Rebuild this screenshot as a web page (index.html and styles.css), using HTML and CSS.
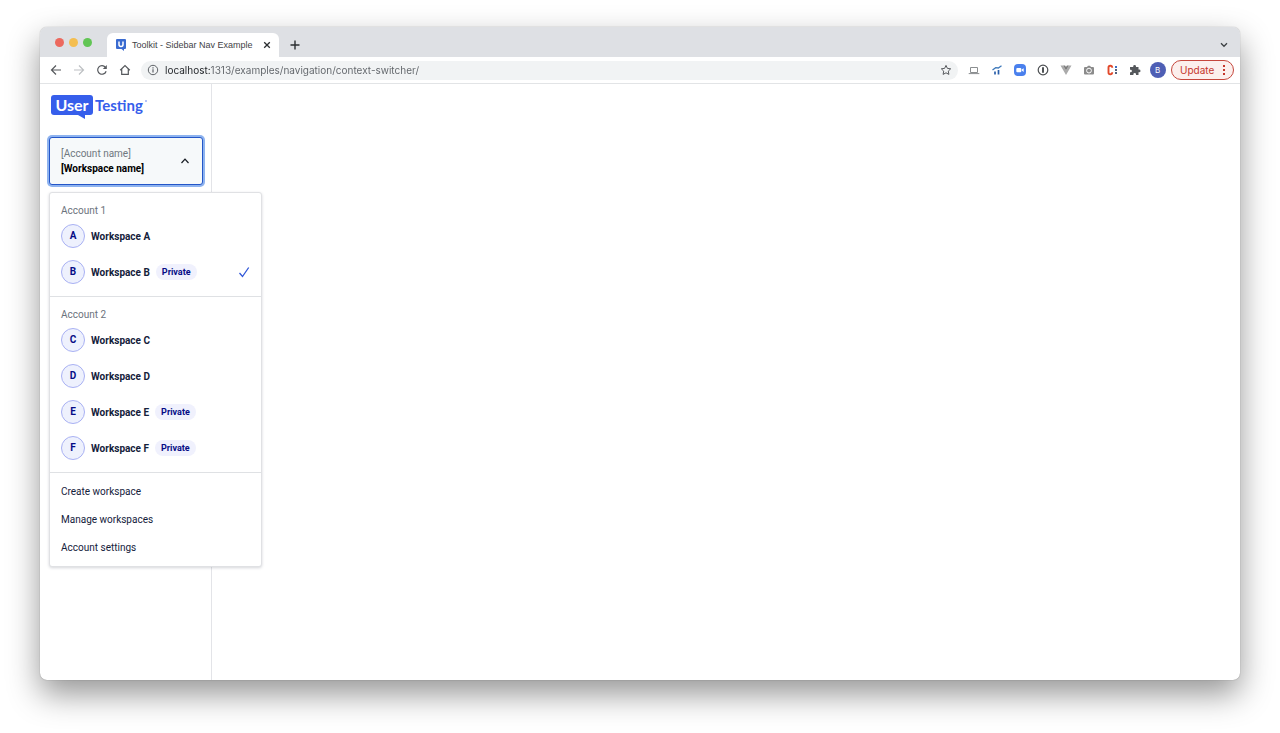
FILE: index.html
```html
<!DOCTYPE html>
<html lang="en">
<head>
<meta charset="utf-8">
<meta name="viewport" content="width=device-width, initial-scale=1">
<title>Toolkit - Sidebar Nav Example</title>
<link rel="stylesheet" href="styles.css">
</head>
<body>
<div class="window">
  <header class="tabstrip">
    <div class="lights"><span class="light red"></span><span class="light yellow"></span><span class="light green"></span></div>
    <div class="tab">
      <svg class="favicon" viewBox="0 0 10 12" width="10" height="12"><path d="M1 0h8a1 1 0 0 1 1 1v8a1 1 0 0 1-1 1H8v2L5.500 10H1a1 1 0 0 1-1-1V1a1 1 0 0 1 1-1z" fill="#3a6bd0"/><path d="M3 2.500v3a2 2 0 0 0 4 0v-3" fill="none" stroke="#fff" stroke-width="1.500"/></svg>
      <span class="tab-title">Toolkit - Sidebar Nav Example</span>
      <button class="icon-btn close" aria-label="Close tab"><svg viewBox="0 0 8 8" width="8" height="8"><path d="M1.200 1.200l5.600 5.600M6.800 1.200L1.200 6.800" stroke="#2b2e31" stroke-width="1.300"/></svg></button>
    </div>
    <button class="icon-btn new-tab" aria-label="New tab"><svg viewBox="0 0 10 10" width="10" height="10"><path d="M5 .5v9M.5 5h9" stroke="#2b2e31" stroke-width="1.400"/></svg></button>
    <button class="icon-btn tab-search" aria-label="Search tabs"><svg viewBox="0 0 8 6" width="8" height="6"><path d="M1 1.300l3 3 3-3" fill="none" stroke="#3c4043" stroke-width="1.300"/></svg></button>
  </header>
  <div class="toolbar">
    <button class="icon-btn" aria-label="Back"><svg viewBox="0 0 12 12" width="12" height="12"><path d="M11 6H1.500M6 1.500L1.500 6 6 10.500" fill="none" stroke="#56595d" stroke-width="1.200"/></svg></button>
    <button class="icon-btn" aria-label="Forward"><svg viewBox="0 0 12 12" width="12" height="12"><path d="M1 6h9.500M6 1.500L10.500 6 6 10.500" fill="none" stroke="#bdc0c3" stroke-width="1.200"/></svg></button>
    <button class="icon-btn" aria-label="Reload"><svg viewBox="0 0 12 12" width="12" height="12"><path d="M10.100 7.200A4.300 4.300 0 1 1 9.400 3.300" fill="none" stroke="#56595d" stroke-width="1.200"/><path d="M10.800 1v4H6.800z" fill="#56595d"/></svg></button>
    <button class="icon-btn" aria-label="Home"><svg viewBox="0 0 12 12" width="12" height="12"><path d="M1.200 6.200L6 1.600l4.800 4.600M2.700 5.200v5.200h6.600V5.200" fill="none" stroke="#56595d" stroke-width="1.200"/></svg></button>
    <div class="omnibox">
      <svg viewBox="0 0 12 12" width="12" height="12"><circle cx="6" cy="6" r="4.700" fill="none" stroke="#5f6368"/><path d="M6 5.200v3.400M6 3.200v1.200" stroke="#5f6368" stroke-width="1.200"/></svg>
      <input class="url" type="text" aria-label="Address" value="localhost:1313/examples/navigation/context-switcher/">
      <button class="icon-btn" aria-label="Bookmark this page"><svg viewBox="0 0 12 12" width="12" height="12"><path d="M6 1.400l1.400 3 3.300.4-2.400 2.300.6 3.300L6 8.800l-2.900 1.600.6-3.300L1.300 4.800l3.300-.4z" fill="none" stroke="#56595d"/></svg></button>
    </div>
    <div class="extensions">
      <button class="icon-btn" aria-label="Laptop"><svg viewBox="0 0 12 12" width="12" height="12"><path d="M2.500 3.500h7v5h-7zM.7 9.600h10.600" fill="none" stroke="#8b8e90"/></svg></button>
      <button class="icon-btn" aria-label="Analytics"><svg viewBox="0 0 12 12" width="12" height="12"><path d="M4 7.500v3M7.500 6v4.500" stroke="#285eaa" stroke-width="1.700"/><path d="M1.500 6l3.200-2.300 2.600.3L10.500 1.800" fill="none" stroke="#3d78ba" stroke-width="1.300"/></svg></button>
      <button class="icon-btn" aria-label="Video call"><svg viewBox="0 0 12 12" width="12" height="12"><rect width="12" height="12" rx="4" fill="#4a80ed"/><rect x="2.300" y="4" width="5" height="4.200" rx="1" fill="#fff"/><path d="M7.700 5.600l2-1.400v3.700l-2-1.400z" fill="#fff"/></svg></button>
      <button class="icon-btn" aria-label="Passwords"><svg viewBox="0 0 12 12" width="12" height="12"><circle cx="6" cy="6" r="4.800" fill="none" stroke="#4b4e51" stroke-width="1.200"/><path d="M6 3.200v5.600" stroke="#3c4043" stroke-width="1.800"/></svg></button>
      <button class="icon-btn" aria-label="Component inspector"><svg viewBox="0 0 12 12" width="12" height="12"><path d="M.5 1.500h2.600L6 6.600l2.900-5.100h2.600L6 11z" fill="#aaa"/><path d="M3.100 1.500h2L6 3l.9-1.500h2L6 6.600z" fill="#7c7c7c"/></svg></button>
      <button class="icon-btn" aria-label="Screenshot"><svg viewBox="0 0 12 12" width="12" height="12"><path d="M2 3h2l1-1.300h2L8 3h2a1 1 0 0 1 1 1v5.500a1 1 0 0 1-1 1H2a1 1 0 0 1-1-1V4a1 1 0 0 1 1-1z" fill="#8b8b8b"/><circle cx="6" cy="6.600" r="2.400" fill="#8b8b8b" stroke="#fff"/></svg></button>
      <button class="icon-btn" aria-label="Colors"><svg viewBox="0 0 12 12" width="12" height="12"><path d="M6.200 3.800V3.500A1.700 1.700 0 0 0 4.500 1.700h-.2A1.800 1.800 0 0 0 2.500 3.500v5a1.800 1.800 0 0 0 1.800 1.800h.2A1.700 1.700 0 0 0 6.200 8.500v-.3" fill="none" stroke="#e2492b" stroke-width="1.900"/><path d="M9 2h2v2H9z" fill="#3b6fc4"/><path d="M9 5h2v2H9zM9 8h2v2H9z" fill="#53617c"/></svg></button>
      <button class="icon-btn" aria-label="Extensions"><svg viewBox="0 0 12 12" width="12" height="12"><path d="M1 3h3.200v-.6a1.400 1.400 0 0 1 2.800 0V3h2.500v2.500h.6a1.400 1.400 0 0 1 0 2.800h-.6V11H7v-.7a1.300 1.300 0 0 0-2.600 0v.7H1V8.300h.6a1.300 1.300 0 0 0 0-2.600H1z" fill="#55585c"/></svg></button>
      <button class="icon-btn" aria-label="Profile"><span class="profile">B</span></button>
    </div>
    <button class="update">Update<svg viewBox="0 0 2 10" width="2" height="10"><path d="M0 0h2v2H0zM0 4h2v2H0zM0 8h2v2H0z" fill="#c5362c"/></svg></button>
  </div>
  <div class="page">
    <aside class="sidebar">
      <a class="logo" href="#" aria-label="UserTesting"><span class="logo-user">User<svg class="logo-tail" viewBox="0 0 8 4" width="8" height="4"><path d="M0 0h7v4z" fill="#365eeb"/></svg></span><span>Testing</span><svg class="logo-mark" viewBox="0 0 2 10" width="2" height="10"><circle cx="1" cy="1" r=".7" fill="#365eeb"/></svg></a>
      <div class="switcher">
        <button class="switcher-btn" aria-expanded="true" aria-haspopup="menu">
          <span class="switcher-text"><span class="switcher-account">[Account name]</span><strong>[Workspace name]</strong></span>
          <svg viewBox="0 0 10 8" width="10" height="8"><path d="M1.500 6L5 2.200 8.500 6" fill="none" stroke="#161b22" stroke-width="1.200"/></svg>
        </button>
        <div class="menu">
          <section class="group">
            <h2 class="group-title">Account 1</h2>
            <button class="workspace"><span class="initial">A</span><span>Workspace A</span></button>
            <button class="workspace"><span class="initial">B</span><span>Workspace B</span><span class="badge">Private</span><svg class="check" viewBox="0 0 12 12" width="12" height="12"><path d="M1.500 7l3 3.500L10.700 1.500" fill="none" stroke="#3157d8" stroke-width="1.300"/></svg></button>
          </section>
          <section class="group">
            <h2 class="group-title">Account 2</h2>
            <button class="workspace"><span class="initial">C</span><span>Workspace C</span></button>
            <button class="workspace"><span class="initial">D</span><span>Workspace D</span></button>
            <button class="workspace"><span class="initial">E</span><span>Workspace E</span><span class="badge">Private</span></button>
            <button class="workspace"><span class="initial">F</span><span>Workspace F</span><span class="badge">Private</span></button>
          </section>
          <nav class="links">
            <a href="#">Create workspace</a>
            <a href="#">Manage workspaces</a>
            <a href="#">Account settings</a>
          </nav>
        </div>
      </div>
    </aside>
    <main class="content"></main>
  </div>
</div>
</body>
</html>
```
FILE: styles.css
```css
* { box-sizing: border-box; }
body {
  margin: 0;
  min-height: 100vh;
  padding: 27px 40px 53px;
  display: flex;
  background: #fff;
  font-family: Inter, "Liberation Sans", sans-serif;
  font-size: 10px;
  color: #14213b;
}
button { font: inherit; color: inherit; border: 0; background: none; padding: 0; }
svg { display: block; flex: none; }
a { color: inherit; text-decoration: none; }

.window {
  flex: 1;
  display: flex;
  flex-direction: column;
  border-radius: 7px;
  background: #fff;
  box-shadow: 0 0 1px rgba(0, 0, 0, .45), 0 14px 32px rgba(0, 0, 0, .42);
}
.tabstrip {
  display: flex;
  align-items: flex-end;
  height: 30px;
  padding: 0 10px 0 15px;
  background: #dee0e4;
  border-radius: 7px 7px 0 0;
}
.lights { display: flex; gap: 5px; align-self: center; width: 52px; }
.light { width: 9px; height: 9px; border-radius: 50%; }
.red { background: #ec695e; }
.yellow { background: #f4be50; }
.green { background: #61c554; }
.tab {
  display: flex;
  align-items: center;
  width: 172px;
  height: 24px;
  padding: 0 8px 0 9px;
  background: #fff;
  border-radius: 6px 6px 0 0;
}
.tab-title {
  flex: 1;
  padding-left: 6px;
  font-family: "Liberation Sans", Arial, sans-serif;
  font-size: 9px;
  color: #3f4246;
  white-space: nowrap;
}
.icon-btn { display: flex; align-items: center; justify-content: center; width: 23px; height: 20px; flex: none; }
.close { width: 8px; }
.new-tab { height: 24px; width: 32px; }
.tab-search { margin-left: auto; height: 24px; width: 12px; }

.toolbar {
  display: flex;
  align-items: center;
  height: 27px;
  padding: 0 6px 0 4px;
  border-bottom: 1px solid #e2e4e6;
}
.omnibox {
  flex: 1;
  display: flex;
  align-items: center;
  height: 19px;
  margin: 0 4px 0 5px;
  padding: 0 1px 0 6px;
  border-radius: 10px;
  background: #f1f3f4;
}
.url {
  flex: 1;
  min-width: 0;
  border: 0;
  padding: 0 0 0 6px;
  font: inherit;
  background: linear-gradient(90deg, #1f2226 51px, #5f6368 51px);
  background-clip: text;
  -webkit-background-clip: text;
  color: transparent;
}
.extensions { display: flex; }
.profile {
  width: 16px;
  height: 16px;
  border-radius: 50%;
  background: #4e5fb5;
  color: #fff;
  font-size: 8px;
  line-height: 16px;
  text-align: center;
}
.update {
  display: flex;
  align-items: center;
  justify-content: space-between;
  width: 63px;
  height: 20px;
  padding: 0 8px;
  margin-left: 2px;
  border: 1px solid #c5463c;
  border-radius: 10px;
  background: #fcefed;
  color: #c5362c;
}

.page { flex: 1; display: flex; font-family: Roboto, Lato, sans-serif; }
.sidebar { width: 172px; padding: 11px 8px 11px 9px; border-right: 1px solid #e3e4e8; }
.content { flex: 1; }
.logo {
  display: flex;
  align-items: center;
  gap: 2px;
  height: 20px;
  margin: 0 2px 22px;
  font-family: Lato, sans-serif;
  font-size: 15px;
  font-weight: 700;
  color: #365eeb;
}
.logo-user {
  position: relative;
  width: 42px;
  height: 20px;
  border-radius: 3px;
  background: #365eeb;
  color: #fff;
  font-size: 16px;
  line-height: 20px;
  text-align: center;
}
.logo-tail { position: absolute; right: 7px; top: 100%; }

.switcher { position: relative; }
.switcher-btn {
  display: flex;
  align-items: center;
  justify-content: space-between;
  width: 100%;
  height: 48px;
  padding: 0 12px 0 11px;
  border: 1px solid #2456c8;
  border-radius: 3px;
  background: #f6f9fa;
  box-shadow: 0 0 0 2px #8eb3ef;
  color: #000;
  text-align: left;
}
.switcher-text { display: flex; flex-direction: column; line-height: 15px; }
.switcher-account { color: #6f7880; }
.menu {
  position: absolute;
  top: 55px;
  left: 0;
  width: 213px;
  border: 1px solid #e0e1e4;
  border-radius: 3px;
  background: #fff;
  box-shadow: 0 1px 3px rgba(20, 30, 50, .18);
}
.group { padding: 12px 11px; border-bottom: 1px solid #dfe1e4; }
.group-title { margin: 0 0 7px; font-size: 10px; line-height: 12px; font-weight: 400; color: #6b727c; }
.workspace { display: flex; align-items: center; width: 100%; height: 24px; font-weight: 700; text-align: left; }
.workspace + .workspace { margin-top: 12px; }
.initial {
  width: 24px;
  height: 24px;
  margin-right: 6px;
  border: 1px solid #a9b1f3;
  border-radius: 50%;
  background: #eef1fd;
  color: #060c86;
  line-height: 22px;
  text-align: center;
}
.badge {
  margin-left: 6px;
  padding: 0 6px;
  border-radius: 8px;
  background: #f0f1fd;
  color: #060c86;
  font-size: 9px;
  line-height: 16px;
}
.check { margin-left: auto; }
.links { display: flex; flex-direction: column; padding: 5px 11px 4px; line-height: 28px; }
```
